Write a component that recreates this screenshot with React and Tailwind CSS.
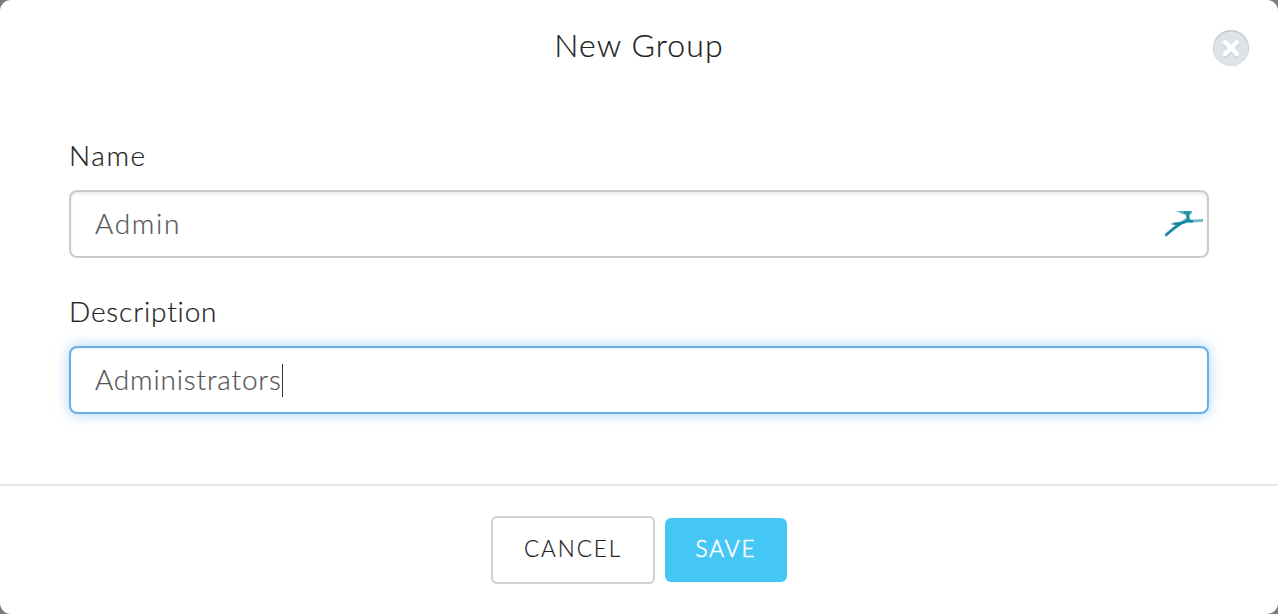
function CloseIcon() {
  return (
    <svg className="h-9 w-9" viewBox="0 0 36 36" fill="none">
      <circle cx="18" cy="18" r="18" fill="#c6cacd" />
      <circle cx="18" cy="18.8" r="17.2" fill="#dfe3e6" />
      <path d="M12.4 13.8 23.6 25M23.6 13.8 12.4 25" stroke="#c3c8cc" strokeWidth="4.6" strokeLinecap="round" />
      <path d="M12.2 12.4 23.8 24M23.8 12.4 12.2 24" stroke="#fff" strokeWidth="4.6" strokeLinecap="round" />
    </svg>
  );
}

function AntelopeIcon() {
  return (
    <svg className="h-[26px] w-[38px]" viewBox="0 0 38 26" fill="none">
      <path d="M25 8.8 38 8v2.8l-13 1z" fill="#6fbac9" />
      <path d="M11 0h16.5l-1 2.6-2 1.6.6 4.2 3 1-1.1 2.2-4 .2-6 1.4-5.5 4.2L0 26v-3.6l7-5.4 3.4-2.8-4.4-.6 1-1.8 6-.2 5-2.4 3.4-2.6-.6-2.6-4-1.2z" fill="#5fb2c3" />
      <path d="M19 1.5h6M22.5 3l.8 6.2L16 12.5 9 17 1 24.5M23 9.6l5 .8M9 12.8l6-.6" stroke="#13859c" strokeWidth="2.2" />
    </svg>
  );
}

export default function App() {
  return (
    <div className="h-[614px] w-[1278px] bg-[#7b7a7d] font-['Lato','Liberation_Sans',sans-serif] font-light">
      <div className="flex h-full flex-col overflow-hidden rounded-[11px] bg-white text-[#222] [-webkit-text-stroke:0.2px]">
        <header className="grid h-24 grid-cols-[1fr_auto_1fr] items-center pr-[29px]">
          <h1 className="col-start-2 pb-[6px] pl-[29px] text-[32px] leading-10 tracking-[1.1px]">New Group</h1>
          <button className="justify-self-end" aria-label="Close">
            <CloseIcon />
          </button>
        </header>

        <main className="flex grow flex-col gap-[33px] px-[69px] pt-[39px] text-[28px]">
          <div className="flex flex-col gap-[15px]">
            <label className="h-10 leading-10 tracking-[1.6px]">Name</label>
            <div className="flex h-[68px] items-center justify-between rounded-lg border-2 border-[#ccc] pr-1 pl-6 text-[#555] shadow-[inset_0_2px_3px_rgba(0,0,0,0.09)]">
              <span className="pb-[2px] leading-10 tracking-[1.7px]">Admin</span>
              <AntelopeIcon />
            </div>
          </div>
          <div className="flex flex-col gap-[15px]">
            <label className="h-10 leading-10 tracking-[0.85px]">Description</label>
            <div className="flex h-[68px] items-center rounded-lg border-2 border-[#66afe9] pl-6 text-[#555] shadow-[inset_0_2px_2px_rgba(0,0,0,0.05),0_0_14px_rgba(102,175,233,0.55)]">
              <span className="pb-[2px] leading-10 tracking-[0.82px]">Administrators</span>
              <span className="h-[33px] w-px bg-[#333]" />
            </div>
          </div>
        </main>

        <footer className="flex h-[130px] items-center justify-center gap-[10px] border-t-2 border-[#e5e5e5] text-[22.5px] tracking-[1.9px]">
          <button className="h-[68px] w-[164px] rounded-md border-2 border-[#d0d0d0] pb-[2px] text-[#222]">CANCEL</button>
          <button className="h-16 w-[122px] rounded-md bg-[#45c7f6] pb-[2px] text-white [-webkit-text-stroke:0.6px]">SAVE</button>
        </footer>
      </div>
    </div>
  );
}
